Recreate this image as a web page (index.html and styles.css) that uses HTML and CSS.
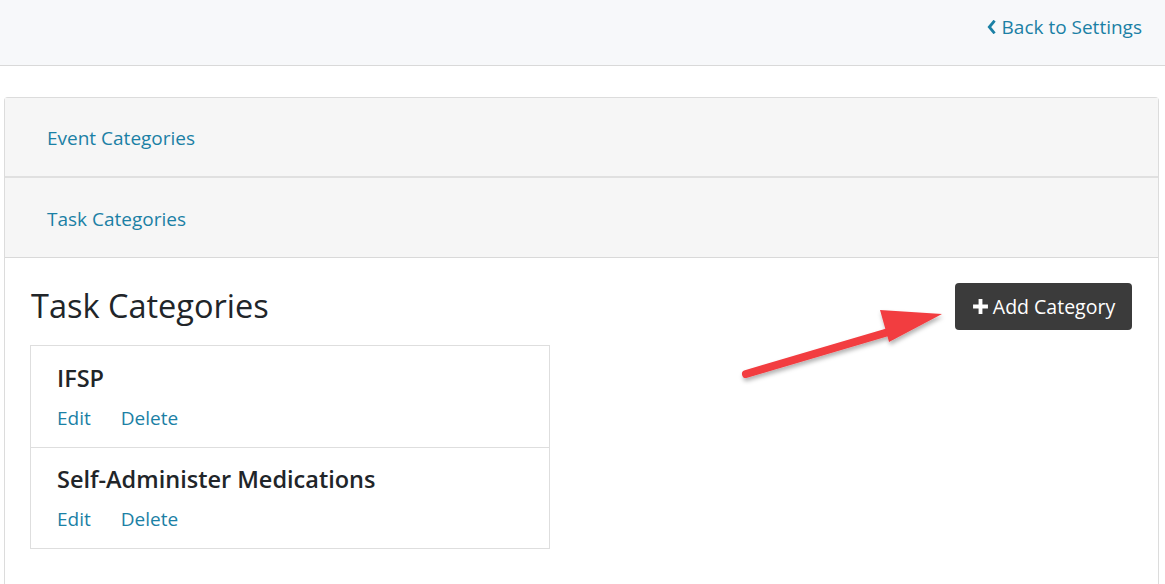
FILE: index.html
```html
<!DOCTYPE html>
<html>
<head>
<meta charset="utf-8">
<link rel="stylesheet" href="styles.css">
</head>
<body>
<header class="topbar">
  <a class="back" href="#"><svg class="chev" viewBox="0 0 10 16" width="9" height="14"><path d="M7.5 2 L2.5 8 L7.5 14" fill="none" stroke="currentColor" stroke-width="3.2" stroke-linecap="square"/></svg>Back to Settings</a>
</header>
<main class="panel">
  <div class="tab"><a href="#">Event Categories</a></div>
  <div class="tab"><a href="#">Task Categories</a></div>
  <section class="body">
    <div class="head">
      <h1>Task Categories</h1>
      <button class="add"><svg viewBox="0 0 16 16" width="17" height="17"><path d="M8 1 V15 M1 8 H15" stroke="#fff" stroke-width="3.6"/></svg>Add Category</button>
    </div>
    <ul class="list">
      <li class="item">
        <div class="name">IFSP</div>
        <div class="actions"><a href="#">Edit</a><a href="#">Delete</a></div>
      </li>
      <li class="item">
        <div class="name">Self-Administer Medications</div>
        <div class="actions"><a href="#">Edit</a><a href="#">Delete</a></div>
      </li>
    </ul>
  </section>
</main>
<svg class="arrow" width="230" height="90" viewBox="0 0 230 90">
  <defs>
    <filter id="sh" x="-20%" y="-40%" width="140%" height="180%">
      <feDropShadow dx="1" dy="3" stdDeviation="2" flood-color="#000" flood-opacity="0.3"/>
    </filter>
  </defs>
  <g filter="url(#sh)">
    <line x1="16" y1="79" x2="172" y2="33" stroke="#f23c40" stroke-width="8" stroke-linecap="round"/>
    <polygon points="150,15 212,19 159,47" fill="#f23c40"/>
  </g>
</svg>
</body>
</html>
```
FILE: styles.css
```css
* { box-sizing: border-box; }
html, body { margin: 0; padding: 0; background: #fff; }
body {
  font-family: "Segoe UI", "Open Sans", "Noto Sans", sans-serif;
  color: #212529;
  width: 1165px;
  height: 584px;
  overflow: hidden;
  position: relative;
}
a { color: #1b80a5; text-decoration: none; }

.topbar {
  height: 66px;
  background: #f7f8fa;
  border-bottom: 1px solid #d9d9d9;
  display: flex;
  align-items: center;
  justify-content: flex-end;
  padding-right: 23px;
}
.back {
  font-size: 19px;
  display: flex;
  align-items: center;
  gap: 6px;
  margin-top: -12px;
}
.chev { color: #1b80a5; }

.panel {
  margin: 31px 6px 0 4px;
  border: 1px solid #dcdcdc;
  border-radius: 4px 4px 0 0;
  border-bottom: none;
}
.tab {
  height: 80px;
  background: #f6f6f6;
  display: flex;
  align-items: center;
  padding-left: 42px;
  padding-top: 2px;
  border-bottom: 2px solid #e0e0e0;
  font-size: 19px;
}
.tab + .tab { height: 80px; border-bottom: 1px solid #d9d9d9; }

.body { padding: 25px 26px 40px 25px; }
.head {
  display: flex;
  justify-content: space-between;
  align-items: flex-start;
}
h1 {
  margin: 1px 0 0 1px;
  font-size: 32.5px;
  font-weight: 400;
  line-height: 44px;
}
.add {
  background: #3b3b3b;
  color: #fff;
  border: none;
  border-radius: 4px;
  height: 47px;
  width: 177px;
  font-family: inherit;
  font-size: 19.5px;
  display: flex;
  align-items: center;
  justify-content: center;
  gap: 4px;
  padding: 0 0 1px 0;
}
.list {
  list-style: none;
  margin: 15px 0 0 0;
  padding: 0;
  width: 520px;
  border: 1px solid #dedede;
}
.item {
  height: 101px;
  padding: 16px 26px 0 26px;
}
.item + .item { border-top: 1px solid #dedede; padding-top: 15px; }
.name {
  font-size: 23.5px;
  font-weight: 600;
  line-height: 32px;
}
.actions {
  margin-top: 12px;
  display: flex;
  gap: 30px;
  font-size: 19px;
  line-height: 24px;
}
.arrow {
  position: absolute;
  left: 730px;
  top: 295px;
}
```
